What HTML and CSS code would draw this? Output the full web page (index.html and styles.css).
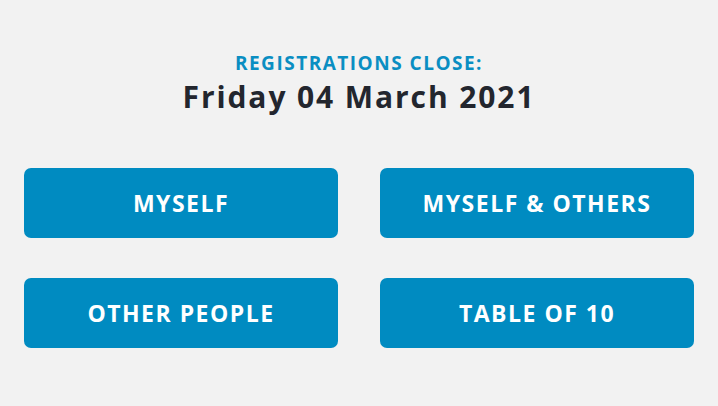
FILE: index.html
```html
<!DOCTYPE html>
<html lang="en">
<head>
    <meta charset="UTF-8">
    <title>Registration type</title>
    <link rel="stylesheet" href="styles.css">
</head>
<body>
    <div class="page">
        <div class="deadline">
            <p class="deadline-label">Registrations close:</p>
            <h1 class="deadline-date">Friday 04 March 2021</h1>
        </div>
        <div class="choices">
            <button type="button" class="choice">Myself</button>
            <button type="button" class="choice">Myself &amp; Others</button>
            <button type="button" class="choice">Other People</button>
            <button type="button" class="choice">Table of 10</button>
        </div>
    </div>
</body>
</html>
```

FILE: styles.css
```css
body {
    margin: 0;
    background: #f2f2f2;
    font-family: "Open Sans", "DejaVu Sans", sans-serif;
}

.page {
    padding: 51px 24px 0;
}

.deadline {
    text-align: center;
}

.deadline-label {
    margin: 0;
    color: #0a8ec2;
    font-size: 19px;
    font-weight: 700;
    line-height: 24px;
    letter-spacing: 1.5px;
    text-transform: uppercase;
}

.deadline-date {
    margin: 2px 0 0;
    color: #23262e;
    font-size: 30px;
    font-weight: 700;
    line-height: 40px;
    letter-spacing: 1.9px;
}

.choices {
    display: grid;
    grid-template-columns: 1fr 1fr;
    column-gap: 42px;
    row-gap: 40px;
    margin-top: 51px;
}

.choice {
    height: 70px;
    border: 0;
    border-radius: 7px;
    background: #008bc1;
    color: #fff;
    font-family: inherit;
    font-size: 23px;
    font-weight: 700;
    letter-spacing: 1.5px;
    text-transform: uppercase;
    cursor: pointer;
}
```
